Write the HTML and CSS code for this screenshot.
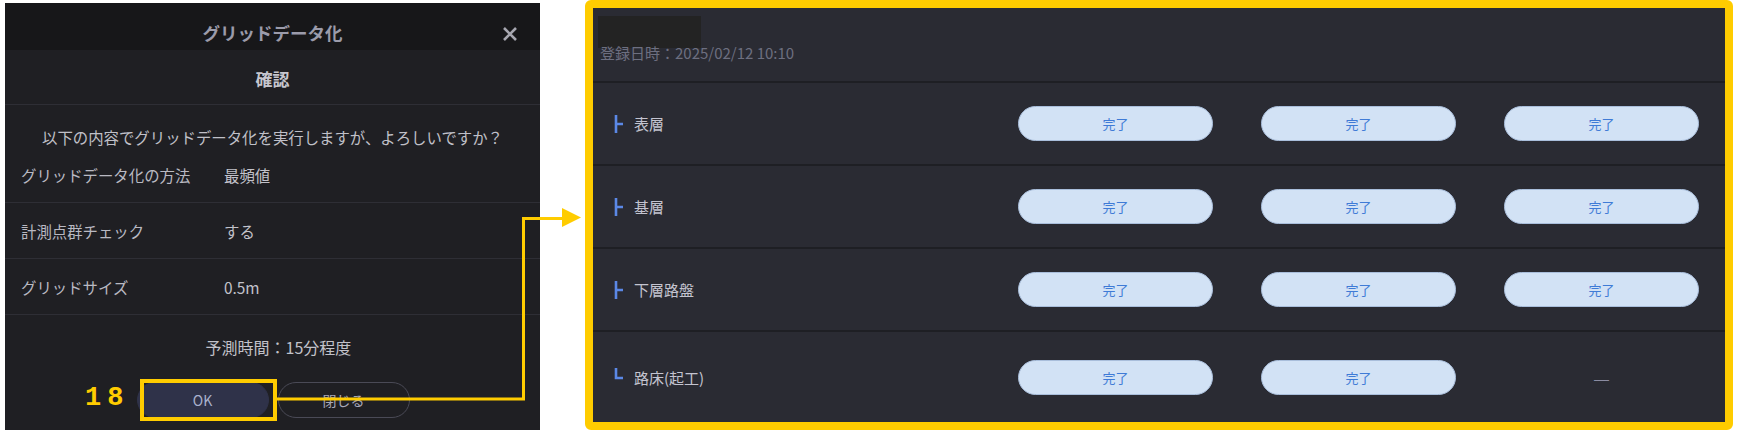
FILE: index.html
```html
<!DOCTYPE html>
<html lang="ja">
<head>
<meta charset="utf-8">
<title>グリッドデータ化</title>
<link rel="stylesheet" href="styles.css">
</head>
<body>
<div class="stage">
  <section class="dialog">
    <header class="dlg-head">
      <span class="dlg-title">グリッドデータ化</span>
      <svg class="dlg-close" width="16" height="14" viewBox="0 0 16 14"><path d="M2 1 L14 13 M14 1 L2 13" stroke="#a7a7b0" stroke-width="2.6" stroke-linecap="butt"/></svg>
    </header>
    <div class="dlg-sub">確認</div>
    <p class="dlg-q">以下の内容でグリッドデータ化を実行しますが、よろしいですか？</p>
    <div class="dlg-row"><span class="k">グリッドデータ化の方法</span><span class="v">最頻値</span></div>
    <div class="dlg-row"><span class="k">計測点群チェック</span><span class="v">する</span></div>
    <div class="dlg-row"><span class="k">グリッドサイズ</span><span class="v">0.5m</span></div>
    <p class="dlg-time">予測時間：15分程度</p>
    <div class="dlg-btns">
      <button class="btn btn-ok">OK</button>
      <button class="btn btn-close">閉じる</button>
    </div>
  </section>

  <section class="status">
    <div class="st-head">
      <div class="st-mask"></div>
      <div class="st-date">登録日時：2025/02/12 10:10</div>
    </div>
    <div class="st-row">
      <div class="st-label"><svg class="tree" width="10" height="18" viewBox="0 0 10 18"><path d="M2 0 V18 M2 9 H9" stroke="#5b88e6" stroke-width="2.6" fill="none"/></svg>表層</div>
      <div class="cell"><span class="pill">完了</span></div>
      <div class="cell"><span class="pill">完了</span></div>
      <div class="cell"><span class="pill">完了</span></div>
    </div>
    <div class="st-row">
      <div class="st-label"><svg class="tree" width="10" height="18" viewBox="0 0 10 18"><path d="M2 0 V18 M2 9 H9" stroke="#5b88e6" stroke-width="2.6" fill="none"/></svg>基層</div>
      <div class="cell"><span class="pill">完了</span></div>
      <div class="cell"><span class="pill">完了</span></div>
      <div class="cell"><span class="pill">完了</span></div>
    </div>
    <div class="st-row">
      <div class="st-label"><svg class="tree" width="10" height="18" viewBox="0 0 10 18"><path d="M2 0 V18 M2 9 H9" stroke="#5b88e6" stroke-width="2.6" fill="none"/></svg>下層路盤</div>
      <div class="cell"><span class="pill">完了</span></div>
      <div class="cell"><span class="pill">完了</span></div>
      <div class="cell"><span class="pill">完了</span></div>
    </div>
    <div class="st-row st-last">
      <div class="st-label"><svg class="tree" width="10" height="18" viewBox="0 0 10 18"><path d="M2 0 V10 H9" stroke="#5b88e6" stroke-width="2.6" fill="none"/></svg>路床(起工)</div>
      <div class="cell"><span class="pill">完了</span></div>
      <div class="cell"><span class="pill">完了</span></div>
      <div class="cell"><span class="dash">—</span></div>
    </div>
  </section>

  <svg class="annot" width="1738" height="435" viewBox="0 0 1738 435">
    <rect x="142" y="381" width="133" height="38" fill="none" stroke="#ffcc00" stroke-width="4"/>
    <polyline points="277,399 523.5,399 523.5,218.5 564,218.5" fill="none" stroke="#ffcc00" stroke-width="3"/>
    <polygon points="562,208 581,217.5 562,227" fill="#ffcc00"/>
  </svg>
  <span class="annot-num">18</span>
</div>
</body>
</html>
```

FILE: styles.css
```css
* { box-sizing: border-box; }

html, body {
  margin: 0;
  padding: 0;
  background: #ffffff;
}

body {
  font-family: "Noto Sans CJK JP", "Noto Sans", sans-serif;
  width: 1738px;
  height: 435px;
  overflow: hidden;
}

.stage {
  position: relative;
  display: flex;
  align-items: flex-start;
  gap: 45px;
  padding-left: 5px;
  width: 1738px;
  height: 435px;
}

/* ---------- dialog ---------- */
.dialog {
  margin-top: 3px;
  width: 535px;
  height: 427px;
  background: #1f1f23;
  display: flex;
  flex-direction: column;
  color: #bcbcc5;
}

.dlg-head {
  position: relative;
  height: 47px;
  padding-top: 18px;
  background: #171719;
  text-align: center;
}

.dlg-title {
  display: block;
  font-size: 17.5px;
  line-height: 24px;
  font-weight: 700;
  color: #9b9baa;
  margin-top: -12px;
  padding-top: 12px;
}

.dlg-close {
  position: absolute;
  right: 22px;
  top: 24px;
}

.dlg-sub {
  height: 55px;
  padding-top: 4px;
  line-height: 50px;
  text-align: center;
  font-size: 17px;
  font-weight: 700;
  color: #c6c6ce;
  border-bottom: 1px solid #2e2e35;
}

.dlg-q {
  margin: 0;
  height: 42px;
  padding-top: 22px;
  line-height: 20px;
  text-align: center;
  font-size: 15.4px;
  color: #c0c0c8;
}

.dlg-row {
  display: grid;
  grid-template-columns: 203px 1fr;
  align-items: center;
  height: 56px;
  padding-left: 16px;
  border-bottom: 1px solid #2e2e35;
  font-size: 15.4px;
  color: #b9b9c2;
}

.dlg-row .v { color: #c2c2ca; }

.dlg-time {
  margin: 0;
  padding-top: 22px;
  padding-left: 12px;
  line-height: 20px;
  text-align: center;
  font-size: 16px;
  color: #c2c2ca;
}

.dlg-btns {
  margin-top: 25px;
  display: flex;
  justify-content: center;
  gap: 9px;
  padding-left: 1px;
}

.btn {
  width: 132px;
  height: 36px;
  border-radius: 18px;
  font-family: "Noto Sans CJK JP", "Noto Sans", sans-serif;
  font-size: 14px;
  padding: 0;
  cursor: pointer;
}

.btn-ok {
  background: #2f3249;
  border: 1px solid #2f3249;
  color: #a9b1cc;
}

.btn-close {
  background: transparent;
  border: 1px solid #4a4a56;
  color: #a8a8b8;
}

/* ---------- status panel ---------- */
.status {
  width: 1148px;
  height: 430px;
  border: 8px solid #ffcc00;
  border-radius: 6px;
  background: #2a2b33;
  display: flex;
  flex-direction: column;
}

.st-head {
  height: 75px;
  padding: 8px 0 0 5px;
  border-bottom: 2px solid #1e1f24;
}

.st-mask {
  width: 103px;
  height: 32px;
  background: #232323;
}

.st-date {
  margin-top: -4px;
  padding-left: 2px;
  font-size: 15px;
  line-height: 18px;
  color: #6d6f80;
}

.st-row {
  display: grid;
  grid-template-columns: 1fr 243px 243px 243px;
  align-items: center;
  height: 83px;
  padding-right: 2px;
  border-bottom: 2px solid #1e1f24;
}

.st-last {
  flex: 1;
  border-bottom: none;
}

.st-label {
  display: flex;
  align-items: center;
  padding-left: 21px;
  font-size: 15px;
  color: #c4c4d0;
}

.tree {
  margin-right: 10px;
  flex: none;
}

.cell {
  display: flex;
  justify-content: center;
  align-items: center;
}

.pill {
  width: 195px;
  height: 35px;
  border-radius: 18px;
  background: #d2e2f5;
  border: 1px solid #a9bedb;
  color: #3f7bd6;
  font-size: 13px;
  line-height: 33px;
  text-align: center;
}

.dash {
  font-family: "Liberation Sans", sans-serif;
  color: #8b8ca2;
  font-size: 15px;
  line-height: 35px;
  padding-top: 3px;
}

/* ---------- annotation overlay ---------- */
.annot {
  position: absolute;
  left: 0;
  top: 0;
  pointer-events: none;
}

.annot-num {
  position: absolute;
  left: 85px;
  top: 385px;
  font-family: "Liberation Mono", "DejaVu Sans Mono", monospace;
  font-weight: 700;
  font-size: 27px;
  line-height: 27px;
  letter-spacing: 6px;
  color: #ffcc00;
}
```
